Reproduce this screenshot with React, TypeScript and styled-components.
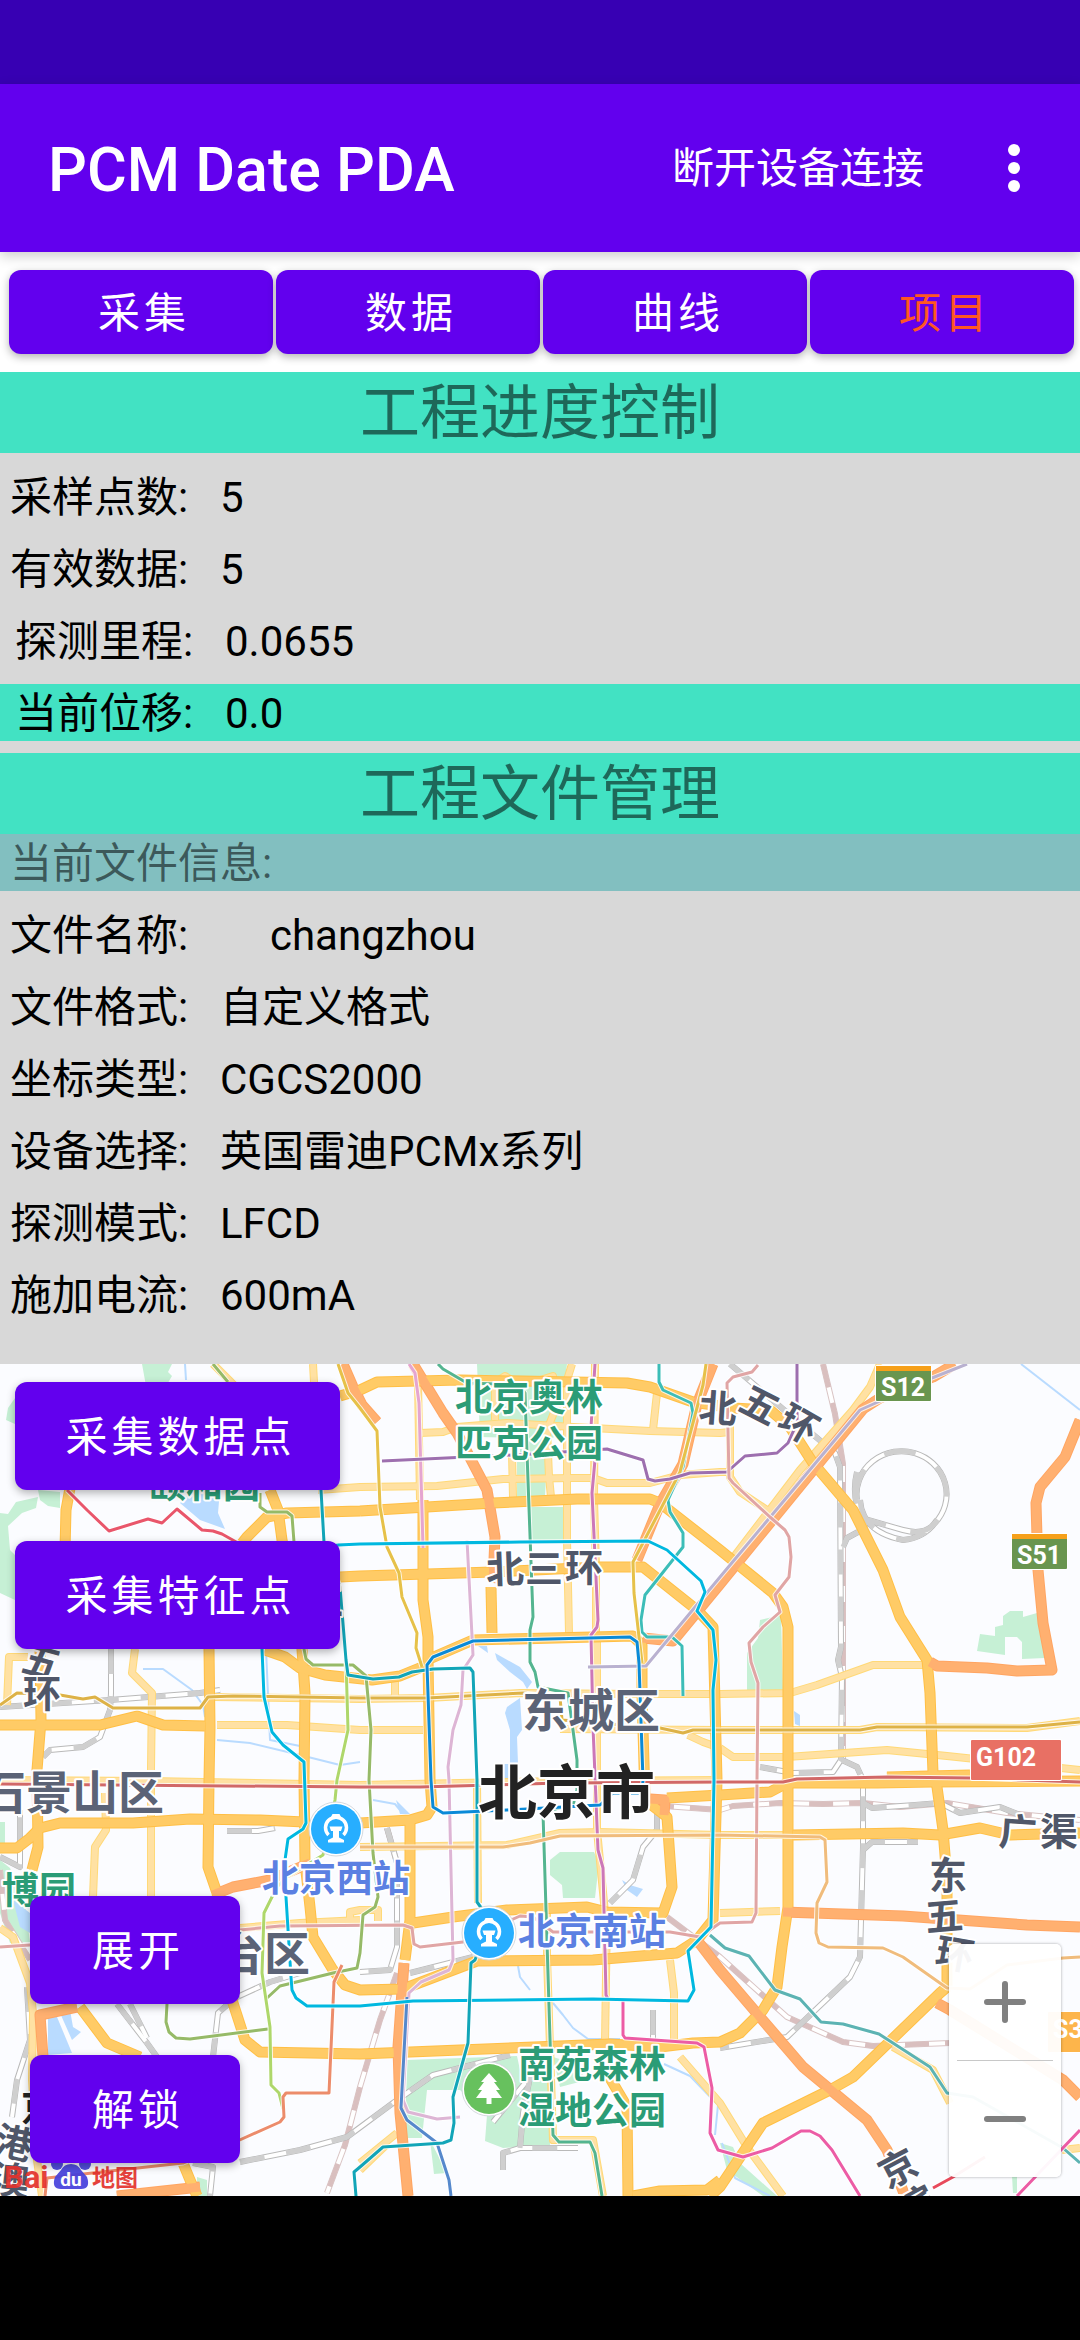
import React from "react";
import styled, { createGlobalStyle } from "styled-components";

const sans = `Roboto, "Noto Sans CJK SC", sans-serif`;

const GlobalStyle = createGlobalStyle`
  *, *::before, *::after { box-sizing: border-box; }
  body { margin: 0; background: #fff; font-family: ${sans}; }
  h1, h2, h3, dl, dd { margin: 0; }
  button { font-family: inherit; border: 0; margin: 0; padding: 0; cursor: pointer; }
`;

const Page = styled.div`
  display: flex;
  flex-direction: column;
  min-height: 100vh;
`;

const StatusBar = styled.div`
  height: 84px;
  background: #3700b3;
`;

const AppBar = styled.header`
  display: flex;
  align-items: center;
  height: 168px;
  padding: 0 48px;
  background: #6200ee;
  color: #fff;
  box-shadow: 0 4px 12px rgba(0, 0, 0, 0.2);
  z-index: 1;
`;

const AppTitle = styled.h1`
  flex: 1;
  padding-top: 4px;
  font-size: 61px;
  line-height: 72px;
  font-weight: 500;
`;

const BarAction = styled.button`
  padding-top: 2px;
  background: none;
  color: #fff;
  font-size: 42px;
  line-height: 60px;
`;

const OverflowButton = styled.button`
  display: flex;
  justify-content: center;
  width: 36px;
  margin-left: 72px;
  background: none;
`;

const Tabs = styled.nav`
  display: grid;
  grid-template-columns: repeat(4, 1fr);
  gap: 3px;
  padding: 18px 6px 18px 9px;
`;

const RaisedButton = styled.button<{ $height: number; $active?: boolean }>`
  height: ${(p) => p.$height}px;
  padding: 4px 0 0 6px;
  border-radius: 12px;
  background: #6200ee;
  color: ${(p) => (p.$active ? "#ff5722" : "#fff")};
  font-size: 42px;
  line-height: 60px;
  letter-spacing: 4px;
  box-shadow: 0 3px 8px rgba(0, 0, 0, 0.3);
`;

const Info = styled.main`
  background: #d8d8d8;
  padding-bottom: 41px;
`;

const SectionTitle = styled.h2`
  padding-top: 3px;
  background: #42e2c3;
  color: rgba(0, 0, 0, 0.54);
  font-size: 60px;
  line-height: 78px;
  font-weight: 400;
  text-align: center;
`;

const FileHeading = styled.h3`
  padding: 2px 0 0 10px;
  background: #82bfc0;
  color: rgba(0, 0, 0, 0.54);
  font-size: 42px;
  line-height: 55px;
  font-weight: 400;
`;

const Fields = styled.dl<{ $after?: number }>`
  display: grid;
  gap: 15px;
  padding: 15px 0 ${(p) => p.$after ?? 0}px;
`;

const Field = styled.div<{ $inset?: boolean; $highlight?: boolean }>`
  display: flex;
  padding: 2px 0 0 ${(p) => (p.$inset ? 15 : 10)}px;
  background: ${(p) => (p.$highlight ? "#42e2c3" : "none")};
  color: #000;
  font-size: 42px;
  line-height: 55px;
`;

const FieldName = styled.dt`
  width: 210px;
`;

const FieldValue = styled.dd<{ $indent?: boolean }>`
  padding-left: ${(p) => (p.$indent ? 50 : 0)}px;
`;

const MapArea = styled.section`
  position: relative;
  flex: 1;
  display: flex;
  justify-content: space-between;
  align-items: stretch;
  min-height: 640px;
  background: #fbfcff;
  overflow: hidden;
`;

const MapDrawing = styled.svg`
  position: absolute;
  inset: 0;
  width: 100%;
  height: 100%;
`;

const MapActions = styled.div`
  position: relative;
  display: flex;
  flex-direction: column;
  justify-content: space-between;
  padding: 18px 15px 33px;
`;

const ActionGroup = styled.div<{ $width: number; $indent?: number }>`
  display: grid;
  gap: 51px;
  width: ${(p) => p.$width}px;
  margin-left: ${(p) => p.$indent ?? 0}px;
`;

const ZoomControl = styled.div`
  position: relative;
  align-self: flex-end;
  display: grid;
  grid-template-rows: 1fr 1px 1fr;
  width: 112px;
  height: 233px;
  margin: 0 19px 19px 0;
  border-radius: 5px;
  background: rgba(255, 255, 255, 0.95);
  box-shadow: 0 0 3px rgba(0, 0, 0, 0.35);
`;

const ZoomButton = styled.button`
  display: grid;
  place-items: center;
  background: none;
`;

const ZoomDivider = styled.div`
  margin: 0 8px;
  background: #c8c8c8;
`;

const NavigationBar = styled.footer`
  height: 144px;
  background: #000;
`;

const MapText = styled.text`
  font-family: "Noto Sans CJK SC", sans-serif;
  font-weight: 700;
  stroke: #fff;
  stroke-width: 4px;
  stroke-linejoin: round;
  paint-order: stroke;
`;

const ShieldText = styled.text`
  font-family: Roboto, sans-serif;
  font-weight: 700;
  font-size: 25px;
  fill: #fff;
`;

const parks = [
  "142,4 172,4 168,12 172,16 166,26 146,26",
  "15,38 8,48 6,60 15,64",
  "0,153 8,154 16,142 38,137 36,148 22,153 8,166 10,190 15,195 15,240 0,233",
  "38,130 60,132 60,148 48,146 40,140",
  "477,4 567,4 565,20 560,45 567,63 555,77 545,80 545,93 520,93 520,78 480,77",
  "517,93 547,93 545,137 517,137",
  "530,147 564,147 564,180 531,180",
  "760,260 781,255 783,330 747,330 747,293 758,278",
  "980,274 995,276 995,267 1003,265 1003,256 1010,251 1023,251 1023,257 1037,253 1045,298 1022,299 1022,282 1017,277 1005,277 1005,295 977,291",
  "0,462 5,462 5,487 0,487",
  "0,500 10,508 25,545 30,582 10,583 0,553",
  "550,500 560,492 594,492 599,503 595,538 563,538 562,525 550,515",
  "407,700 517,696 520,710 550,713 550,785 503,788 485,781 487,755 460,730 427,730 422,778 405,778",
  "430,780 447,813 434,814",
  "553,697 573,703 587,720 560,727",
  "720,783 733,787 740,803 777,836 763,836 727,810",
  "1012,816 1017,816 1017,833 1013,833",
  "197,817 207,820 207,836 197,836",
];

const lakes = [
  "180,143 193,130 220,130 218,153 225,169 200,160",
  "13,540 30,553 30,573 20,567",
  "48,657 57,657 72,693 48,695",
  "60,653 70,650 73,667 81,672 72,680",
  "478,286 487,286 488,293",
  "495,293 520,307 532,322 527,329 523,322 510,312 497,300",
  "507,347 520,338 522,370 517,377 518,404 510,404 510,370 505,353",
  "504,404 509,404 509,425 504,425",
  "622,520 630,525 643,529 637,537 627,530",
  "794,351 800,355 800,366 795,364",
  "396,440 410,454 400,454",
];

const streams = [
  "185,4 186,20",
  "143,309 163,309 192,330 203,345 205,357",
  "266,289 270,380 300,386 M217,380 250,383 300,395 340,405 360,402",
  "1021,4 1080,50",
  "373,440 395,444 400,450",
  "518,606 520,617 530,630 M553,643 563,655 573,668 588,679 620,679",
  "664,704 690,716 718,745 715,775",
  "722,783 735,818 770,836",
];

const lightRoads = [
  "28,297 9,297 7,345",
  "135,289 132,313 152,333 151,408 151,537",
  "105,433 106,470 95,487 93,537",
  "213,337 360,339 427,338 520,333 640,334 720,334 790,333 817,325 873,305 927,305",
  "217,365 287,365 360,370 423,370",
  "213,4 235,26",
  "313,4 315,40 330,40",
  "318,130 360,127 437,126 503,119 573,118 593,118 607,123 650,123 680,115 720,112 733,112",
  "420,73 443,72 457,67 507,63 573,67 650,71 720,73 730,72",
  "418,20 420,140",
  "512,93 513,137",
  "494,23 505,16 515,22",
  "495,23 495,60",
  "572,4 567,20 567,180 569,273",
  "595,4 594,139 596,207 596,277",
  "657,33 653,70",
  "540,20 553,16 557,45 547,70 549,117 551,137",
  "395,320 395,337",
  "730,40 730,117 740,132 767,150",
  "880,4 870,27 853,50 800,110 733,198",
  "560,369 720,370 860,370 877,367 1027,368 1080,361",
  "720,388 733,397 787,397 887,390 947,396 1080,410",
  "688,375 703,382 720,388",
  "360,487 507,485 560,473 600,472 720,475 793,475",
  "547,553 547,597 550,687 553,780 593,780 603,836",
  "607,553 605,683",
  "670,600 674,633 674,680",
  "680,697 720,743 747,787 783,836",
  "597,280 597,470 605,553",
  "477,420 478,543",
  "360,803 397,773",
  "240,568 300,563 360,560",
  "350,561 350,552 360,550 378,550 378,561",
  "720,553 780,551",
  "893,687 933,710 950,743",
  "1062,790 1080,788",
  "0,568 13,577 30,623 33,653 32,720 37,800 42,836",
  "360,810 385,786",
  "0,420 150,421 360,425 560,421 720,420",
];

const mainRoads = [
  "70,128 66,150 65,190 60,240 40,289 41,360 37,410 38,487 32,510",
  "0,488 17,488 30,478 40,468 60,463 133,463 190,459 260,460 305,462",
  "0,365 100,365 137,356 163,365 205,366",
  "360,151 287,153 267,157 247,177 225,205 209,260 209,289 210,367 209,420 208,507 217,533 233,643 245,680 260,692 360,694 460,690 610,684 660,687 693,683 720,682 740,673 763,650 777,627 782,587 788,547 788,267 783,247 773,233 720,190 660,143 650,139 577,139 493,143 427,147 360,151",
  "270,130 278,150 282,180 300,260 305,333 304,420 305,503 310,547 313,577 333,610 345,625 360,630 403,629 477,601 593,600 677,593 697,580 713,560 717,420 713,267 697,250 643,207 600,207 493,212 360,216 340,217",
  "265,290 285,297 300,308 325,315 372,320 400,316 427,305",
  "427,300 473,280 633,276 642,285 642,333 645,440 667,457 672,527 663,553 607,552 587,547 507,550 453,557 413,563",
  "428,300 430,420 432,447 427,455 410,460 360,463",
  "410,460 410,560 405,600",
  "423,140 423,240 428,277 428,300",
  "340,36 360,30 377,22 460,20 627,23 650,27 693,42 733,48 770,50 790,67 813,103 853,150 883,210 900,257 927,300 930,333 933,413 937,427 943,470 947,520 947,627 940,633 853,717 830,730 763,763 720,827 710,836",
  "491,227 492,273",
  "793,475 903,473 940,475 980,468 1010,475 1080,473",
  "80,647 107,683 140,697",
  "183,803 190,820 197,836",
  "607,713 627,747 628,836",
  "633,836 660,831 707,830 720,820",
  "667,438 720,435 770,432 787,423 877,423 933,422 1080,421",
  "887,417 970,415",
];

const expressways = [
  "413,4 443,53 457,73 487,130 495,177 493,223",
  "343,4 353,27 362,45 377,62",
  "713,4 697,44 683,104 660,144 637,200",
  "955,4 933,17 880,38 863,49 720,224 673,281 643,278",
  "1080,60 1065,97 1040,127 1036,143 1037,177 1038,210 1043,263 1052,310 1017,311 987,308 937,306 930,302",
  "783,552 903,556 1027,565 1080,567",
  "697,580 720,610 760,657 803,707 867,760 887,790 905,836",
  "937,643 950,650 1063,720 1080,737",
  "213,535 233,527 270,520 310,503",
  "77,647 40,655 43,697",
  "117,836 200,827",
  "404,603 398,687 400,753 408,836",
  "650,439 665,440 664,455",
];

const grayRails = [
  "730,4 823,83 835,93 840,107 841,287 838,300 842,317 841,400 833,412 793,413 760,407",
  "842,400 857,407 863,420 863,487 860,597 850,617 787,677 720,688",
  "111,289 111,333 110,350 100,377 83,387 50,390 43,397",
  "0,347 110,340 200,333 220,330",
  "117,644 147,683 157,697",
  "130,644 147,678",
  "27,627 30,680 17,720 12,757",
  "213,697 218,653 235,638 270,622 300,613",
  "0,497 20,507 20,450",
  "193,803 213,807 210,836",
  "240,802 300,790 347,777 393,743 433,715 510,695",
  "653,650 653,680",
  "657,453 657,470 643,487 633,520 610,543",
  "387,468 397,503 397,587 390,610 360,612",
  "410,613 473,597",
  "503,810 503,793 520,788 578,788",
  "520,788 523,753 530,717 493,762",
  "843,187 847,178 858,172",
  "863,443 872,448 915,445 940,443 960,453 1000,447 1020,455",
  "863,490 872,482 918,482",
  "227,471 258,471 275,468",
];

const pinkRails = [
  "823,4 835,54 843,104 843,400",
  "397,613 380,660 360,727 345,785 327,833",
  "667,557 720,597 787,657 843,682 873,686 950,683",
  "650,445 720,450 733,446 780,443 823,444 863,443 900,447 947,443 1007,453 1080,460",
  "0,510 5,560 30,600",
  "387,468 397,503 397,560",
];

const testTrack = "857,140A45 43 0 1 1 935 163Q925 176 903 170L868 160M860 140Q862 172 903 180Q925 178 937 160M857 112Q850 140 866 168";

const subways: [string, string][] = [
  ["#e9566b", "67,130 87,150 109,171 148,159 162,163 177,149 202,170 213,171 222,174 238,183"],
  ["#ddb247", "0,345 17,333 60,335 83,339 95,337 113,348 200,348 208,337 233,336 360,338 427,338 523,333 560,337 562,360 660,368 683,373 693,370 860,370 877,367 1027,367 1080,362"],
  ["#e6c149", "338,4 348,33 360,48 377,71 380,147 387,187 399,213 402,237 417,273 416,288 422,307"],
  ["#e5a5d0", "409,4 415,13 419,43 423,188"],
  ["#ddb5d5", "467,180 473,295 463,310 461,345 453,370 448,407 449,420 453,600 449,610 421,622 409,633 403,740 408,752 437,759 460,757"],
  ["#54b590", "438,4 443,9 467,23 520,25 525,33 527,93 533,257 530,270 530,302 535,312 538,327 568,333 577,400 577,430 573,445 555,449 543,453 553,775 559,782 590,782 595,793 602,836"],
  ["#cc77b8", "595,4 591,67 595,100 592,133 598,260 597,267 591,275 593,367 598,490 603,508 606,635 608,639"],
  ["#3cbdb8", "659,4 659,22 663,30 691,43 693,53 683,107 668,140 670,152 683,173 683,187 645,235 641,260 642,272 647,277 672,277 682,286 683,336"],
  ["#e6c149", "706,4 703,25 680,112 633,202 634,233 642,303"],
  ["#9d6faf", "382,101 533,94 607,89 643,100 648,119 655,121 670,119 690,113 727,112 745,96 777,93 788,83 797,63 797,4"],
  ["#b9b1d0", "588,307 646,306 720,217 860,50 927,20 967,4"],
  ["#e0a5a5", "758,5 752,12 733,17 727,23 729,118 733,123 770,157 785,170 789,177 791,197 789,217 775,235 780,252 763,267 749,283 751,302 758,323 757,420 756,553 752,562 720,563 700,577 670,572 553,572 533,557 520,556 463,582 420,587 414,584 412,568 403,565 280,566 240,570 30,585 0,587"],
  ["#96ba68", "213,4 228,22 M260,133 260,147 267,152 287,152 292,156 294,182 304,289 306,299 313,305 353,305 366,316 371,370 369,420 373,493 378,537 375,547 363,555 360,593 357,608 333,613 280,626 267,638 M268,669 190,679 176,678 169,672 166,662 167,644"],
  ["#aed76b", "346,300 348,370 337,420 335,440 323,495 287,517 277,527 264,553 262,613 270,667 271,725 279,733 283,749"],
  ["#ec8c6b", "342,605 334,622 329,733 286,733 283,737 284,757 280,762 233,783 183,803 47,818 45,836"],
  ["#5588cc", "407,637 401,748 407,760 437,783 449,820 451,836"],
  ["#d16868", "0,424 360,427 420,427 560,423 720,422 783,422 797,419 887,417 970,418 1080,422"],
  ["#f0bc7c", "360,487 503,487 530,483 560,476 720,475 820,477 825,480 827,522 817,543 816,573 819,583 828,587 883,588 903,597 947,628 970,629 1007,605 1063,598 1080,597"],
  ["#5cb3b3", "710,575 725,588 749,596 775,630 800,639 821,662 843,664 879,674 930,707 947,733 973,737 1063,788 1080,803"],
  ["#ec5ca5", "623,639 623,675 625,678 697,683 704,687 712,728 710,773 718,790 743,797 772,788 801,771 810,771 820,776 832,790 860,836 M1080,770 1017,836"],
  ["#e84a5c", "933,828 953,817 985,797"],
  ["#00b8e0", "338,185 360,184 520,182 648,181 667,190 701,221 705,232 697,251 713,270 716,300 713,330 714,420 711,567 688,591 694,630 688,641 593,639 413,641 360,646 307,646 296,638 292,630 291,617 286,537 285,500 288,479 303,469 306,463 304,402 283,385 272,372 264,337 262,289 260,200 338,185"],
  ["#12a5b8", "321,130 324,182 340,227 346,300 348,315 373,319 399,317 412,312 433,309 470,308 473,312 477,420 477,542 490,560 475,600 471,603 468,683 453,737 454,763 451,780 443,783 383,787 360,807 354,812 356,836"],
  ["#0a8ad8", "431,420 427,305 433,297 473,281 630,277 637,282 639,303 643,420 642,433 613,433 600,445 507,450 443,453 433,447 431,420"],
];

const Lines = ({ paths, color, width, dash }: { paths: string[]; color: string; width: number; dash?: string }) => (
  <g fill="none" stroke={color} strokeWidth={width} strokeLinejoin="round" strokeDasharray={dash}>
    {paths.map((d) => (
      <path key={d} d={"M" + d} />
    ))}
  </g>
);

type LabelSpec = { t: string; x: number; y: number; size?: number; color?: string; turn?: number };

const GREEN = "#2b9c76";
const SLATE = "#505769";
const DISTRICT = "#5b6376";
const BLUE = "#5b80e2";

const labels: LabelSpec[] = [
  { t: "颐和园", x: 149, y: 138, color: GREEN },
  { t: "北京奥林", x: 455, y: 51, color: GREEN },
  { t: "匹克公园", x: 455, y: 97, color: GREEN },
  { t: "博园", x: 2, y: 544, color: GREEN },
  { t: "南苑森林", x: 518, y: 718, color: GREEN },
  { t: "湿地公园", x: 518, y: 764, color: GREEN },
  { t: "北京西站", x: 262, y: 532, color: BLUE },
  { t: "北京南站", x: 518, y: 585, color: BLUE },
  { t: "石景山区", x: -20, y: 449, size: 46, color: DISTRICT },
  { t: "东城区", x: 522, y: 367, size: 46, color: DISTRICT },
  { t: "丰台区", x: 172, y: 610, size: 46, color: DISTRICT },
  { t: "北京市", x: 478, y: 454, size: 59, color: "#222" },
];

const roadLabels: LabelSpec[] = [
  { t: "北", x: 505, y: 209, turn: -2 },
  { t: "三", x: 544, y: 208 },
  { t: "环", x: 584, y: 207 },
  { t: "三", x: 325, y: 240 },
  { t: "五", x: 42, y: 302, turn: 15 },
  { t: "环", x: 42, y: 333 },
  { t: "北", x: 718, y: 48, turn: 4 },
  { t: "五", x: 760, y: 45, turn: 27 },
  { t: "环", x: 799, y: 64, turn: 30 },
  { t: "广", x: 1018, y: 472, turn: 4 },
  { t: "渠", x: 1059, y: 471 },
  { t: "东", x: 948, y: 515 },
  { t: "五", x: 944, y: 556, turn: -5 },
  { t: "环", x: 955, y: 594, turn: 10 },
  { t: "京", x: 898, y: 808, turn: -28 },
  { t: "滨", x: 917, y: 845, turn: -28 },
  { t: "京", x: 40, y: 747, color: "#222" },
  { t: "港", x: 14, y: 783, turn: 12 },
  { t: "澳", x: 10, y: 820, turn: 6 },
];

const StationPin = ({ x, y }: { x: number; y: number }) => (
  <g transform={`translate(${x} ${y})`}>
    <circle r="27" fill="#fff" stroke="#d5d9de" strokeWidth="1" />
    <circle r="25" fill="#27aeff" />
    <path d="M-7.500 6A10.500 10.500 0 1 1 7.500 6" fill="none" stroke="#fff" strokeWidth="3.500" />
    <path d="M-3.500-15h7l2 4h-11zM-6.500-2.500H6.500L5 2H3v6.500l5 2.500v2.500H-8V11l5-2.500V2h-2z" fill="#fff" />
  </g>
);

const TreePin = ({ x, y }: { x: number; y: number }) => (
  <g transform={`translate(${x} ${y})`}>
    <circle r="27" fill="#fff" stroke="#d5d9de" strokeWidth="1" />
    <circle r="25" fill="#67c15e" />
    <path d="M0-16L8-7H5L11 1H7L13 9H2.500V15H-2.500V9H-13L-7 1H-11L-5-7H-8Z" fill="#fff" />
  </g>
);

const Shield = ({ x, y, w, h, text, color, strip }: { x: number; y: number; w: number; h: number; text: string; color: string; strip?: string }) => (
  <g transform={`translate(${x} ${y})`}>
    <rect x="-1" y="-1" width={w + 2} height={h + 2} rx="2" fill="#fff" />
    <rect width={w} height={h} rx="1" fill={color} />
    {strip && <rect width={w} height="5" fill={strip} />}
    <ShieldText x="5" y={strip ? 30 : 26}>{text}</ShieldText>
  </g>
);

const CityMap = () => (
  <MapDrawing viewBox="0 4 1080 832" preserveAspectRatio="xMidYMid slice" aria-label="北京市地图" role="img">
    <rect y="0" width="1080" height="840" fill="#fbfcff" />
    <g fill="#c6f0d5">{parks.map((p) => <polygon key={p} points={p} />)}</g>
    <g fill="#b9dbff">{lakes.map((p) => <polygon key={p} points={p} />)}</g>
    <Lines paths={streams} color="#b9dbff" width={2} />

    <Lines paths={pinkRails} color="#d9c4c4" width={6} />
    <Lines paths={pinkRails} color="#fff" width={4} />
    <Lines paths={pinkRails} color="#d9bfbf" width={5} dash="24 16" />
    <Lines paths={grayRails} color="#b9b9b9" width={6} />
    <Lines paths={grayRails} color="#fff" width={4} />
    <Lines paths={grayRails} color="#cfcfcf" width={5} dash="25 22" />
    <Lines paths={[testTrack]} color="#b9b9b9" width={6} />
    <Lines paths={[testTrack]} color="#fff" width={4} />
    <Lines paths={[testTrack]} color="#cfcfcf" width={5} dash="32 25" />

    <Lines paths={lightRoads} color="#ffd978" width={8} />
    <Lines paths={lightRoads} color="#ffe1a3" width={6} />
    <Lines paths={mainRoads} color="#ffbf45" width={11} />
    <Lines paths={expressways} color="#ffa562" width={11} />
    <Lines paths={mainRoads} color="#ffcb66" width={9} />
    <Lines paths={expressways} color="#ffb070" width={9} />

    {subways.map(([color, d]) => (
      <g key={color + d} fill="none" strokeLinejoin="round">
        <path d={"M" + d} stroke="#fff" strokeOpacity="0.8" strokeWidth="5" />
        <path d={"M" + d} stroke={color} strokeWidth="3" />
      </g>
    ))}

    <StationPin x={336} y={469} />
    <StationPin x={489} y={573} />
    <TreePin x={489} y={729} />

    {labels.map((l) => (
      <MapText key={l.t} x={l.x} y={l.y} fontSize={l.size ?? 37} fill={l.color}>{l.t}</MapText>
    ))}
    {roadLabels.map((l, i) => (
      <g key={i} transform={`translate(${l.x} ${l.y}) rotate(${l.turn ?? 0})`}>
        <MapText y="14" fontSize={38} textAnchor="middle" fill={l.color ?? SLATE}>{l.t}</MapText>
      </g>
    ))}

    <Shield x={876} y={6} w={55} h={35} text="S12" color="#69954f" strip="#f6a01a" />
    <Shield x={1012} y={174} w={55} h={35} text="S51" color="#69954f" strip="#f6a01a" />
    <Shield x={971} y={380} w={90} h={40} text="G102" color="#e87064" />
    <Shield x={1048} y={652} w={60} h={40} text="S30" color="#fdb54b" />

    <g opacity="0.92">
      <circle cx="57" cy="804" r="6" fill="#4440dd" />
      <circle cx="85" cy="804" r="6" fill="#4440dd" />
      <ellipse cx="66" cy="796" rx="5" ry="7" fill="#4440dd" />
      <ellipse cx="77" cy="796" rx="5" ry="7" fill="#4440dd" />
      <path d="M71 804Q78 804 81 810L87 817Q91 829 81 829H61Q51 829 55 817L61 810Q64 804 71 804Z" fill="#4440dd" />
      <text x="4" y="828" fontFamily="Roboto, sans-serif" fontWeight="700" fontSize="31" fill="#e4332d">Bai</text>
      <text x="71" y="826" textAnchor="middle" fontFamily="Roboto, sans-serif" fontWeight="700" fontSize="19" fill="#fff">du</text>
      <text x="92" y="826" fontFamily="Noto Sans CJK SC, sans-serif" fontWeight="700" fontSize="23" fill="#e4332d">地图</text>
    </g>
  </MapDrawing>
);

const tabs = ["采集", "数据", "曲线", "项目"];

const progress = [
  { name: "采样点数", value: "5" },
  { name: "有效数据", value: "5" },
  { name: "探测里程", value: "0.0655", inset: true },
  { name: "当前位移", value: "0.0", inset: true, highlight: true },
];

const fileInfo = [
  { name: "文件名称", value: "changzhou", indent: true },
  { name: "文件格式", value: "自定义格式" },
  { name: "坐标类型", value: "CGCS2000" },
  { name: "设备选择", value: "英国雷迪PCMx系列" },
  { name: "探测模式", value: "LFCD" },
  { name: "施加电流", value: "600mA" },
];

export default function App() {
  return (
    <Page lang="zh-CN">
      <GlobalStyle />
      <StatusBar />
      <AppBar>
        <AppTitle>PCM Date PDA</AppTitle>
        <BarAction type="button">断开设备连接</BarAction>
        <OverflowButton type="button" aria-label="更多选项">
          <svg width="12" height="48" viewBox="0 0 12 48" fill="#fff">
            <circle cx="6" cy="6" r="6" />
            <circle cx="6" cy="24" r="6" />
            <circle cx="6" cy="42" r="6" />
          </svg>
        </OverflowButton>
      </AppBar>
      <Tabs>
        {tabs.map((tab) => (
          <RaisedButton key={tab} type="button" $height={84} $active={tab === "项目"}>{tab}</RaisedButton>
        ))}
      </Tabs>
      <Info>
        <SectionTitle>工程进度控制</SectionTitle>
        <Fields $after={12}>
          {progress.map((f) => (
            <Field key={f.name} $inset={f.inset} $highlight={f.highlight}>
              <FieldName>{f.name}:</FieldName>
              <FieldValue>{f.value}</FieldValue>
            </Field>
          ))}
        </Fields>
        <SectionTitle>工程文件管理</SectionTitle>
        <FileHeading>当前文件信息:</FileHeading>
        <Fields>
          {fileInfo.map((f) => (
            <Field key={f.name}>
              <FieldName>{f.name}:</FieldName>
              <FieldValue $indent={f.indent}>{f.value}</FieldValue>
            </Field>
          ))}
        </Fields>
      </Info>
      <MapArea>
        <CityMap />
        <MapActions>
          <ActionGroup $width={325}>
            <RaisedButton type="button" $height={108}>采集数据点</RaisedButton>
            <RaisedButton type="button" $height={108}>采集特征点</RaisedButton>
          </ActionGroup>
          <ActionGroup $width={210} $indent={15}>
            <RaisedButton type="button" $height={108}>展开</RaisedButton>
            <RaisedButton type="button" $height={108}>解锁</RaisedButton>
          </ActionGroup>
        </MapActions>
        <ZoomControl>
          <ZoomButton type="button" aria-label="放大">
            <svg width="42" height="42" viewBox="0 0 42 42" stroke="#808080" strokeWidth="6" strokeLinecap="round">
              <path d="M3 21H39M21 3V39" />
            </svg>
          </ZoomButton>
          <ZoomDivider />
          <ZoomButton type="button" aria-label="缩小">
            <svg width="42" height="42" viewBox="0 0 42 42" stroke="#808080" strokeWidth="6" strokeLinecap="round">
              <path d="M3 21H39" />
            </svg>
          </ZoomButton>
        </ZoomControl>
      </MapArea>
      <NavigationBar />
    </Page>
  );
}
